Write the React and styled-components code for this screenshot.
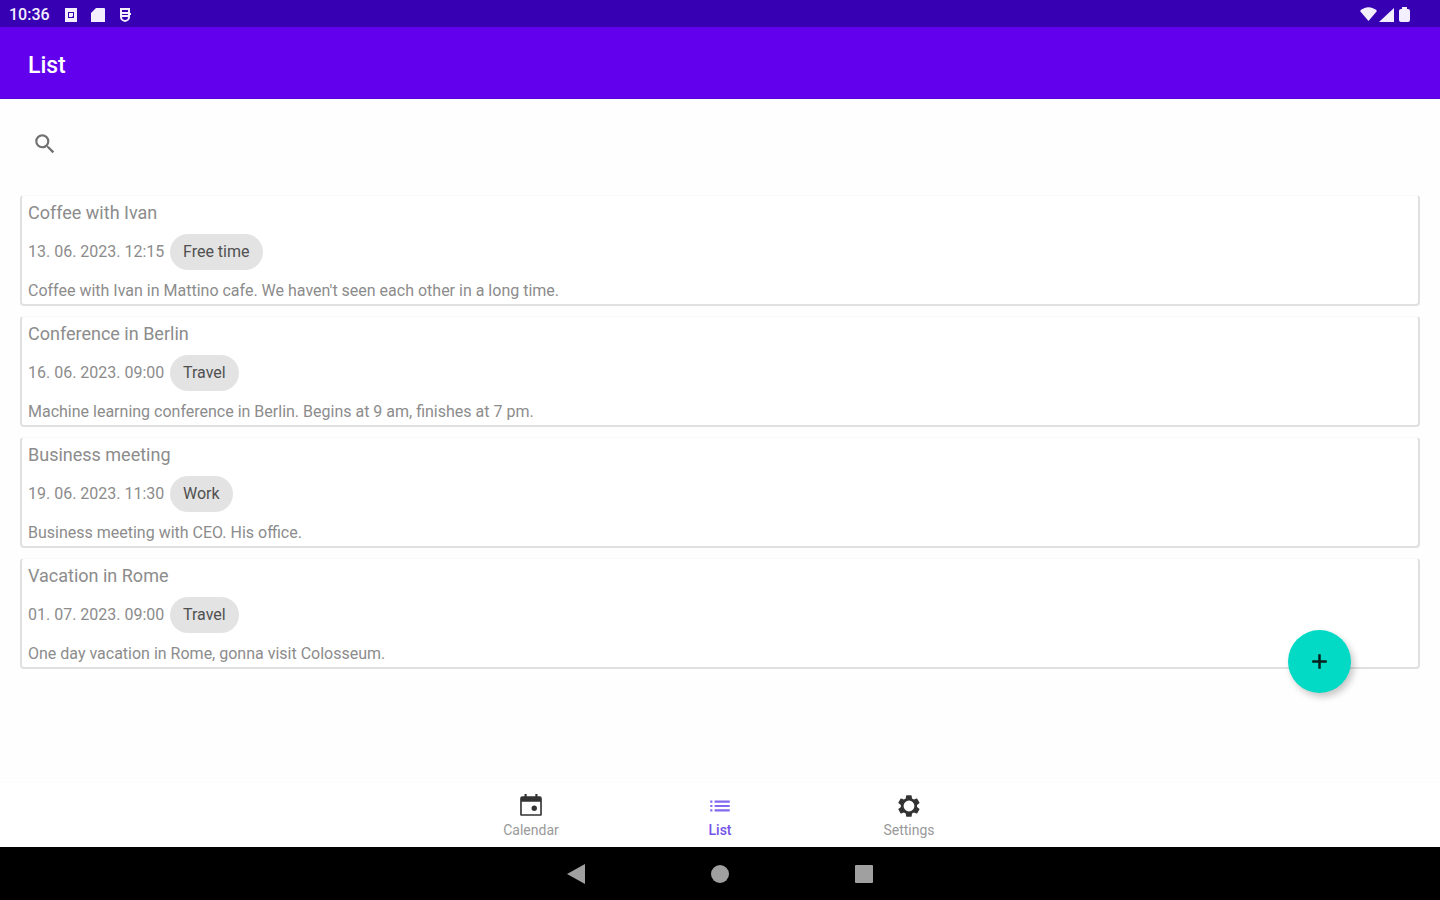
import React from "react";
import styled, { createGlobalStyle } from "styled-components";

const GlobalStyle = createGlobalStyle`
  *, *::before, *::after { box-sizing: border-box; }
  body {
    margin: 0;
    background: #fefefe;
    font-family: Roboto, "Noto Sans", sans-serif;
    color: #8c8c8c;
  }
  h1, h2, p, ul { margin: 0; padding: 0; }
  ul { list-style: none; }
  button { font: inherit; border: 0; padding: 0; background: none; cursor: pointer; }
`;

const Screen = styled.div`
  position: relative;
  display: flex;
  flex-direction: column;
  min-height: 100vh;
`;

const StatusBar = styled.div`
  display: flex;
  align-items: center;
  justify-content: space-between;
  height: 27px;
  padding: 2px 28px 0 9px;
  background: #3700b3;
  color: #f4efff;
`;

const StatusGroup = styled.div`
  display: flex;
  align-items: center;
  gap: ${({ $gap }) => $gap}px;
  svg { display: block; }
`;

const Clock = styled.time`
  width: 42px;
  font-size: 16px;
  font-weight: 500;
  line-height: 20px;
`;

const AppBar = styled.header`
  display: flex;
  align-items: center;
  height: 72px;
  padding: 6px 28px 0;
  background: #6200ee;
  color: #fff;
  border-bottom: 1px solid #5600d4;
`;

const Title = styled.h1`
  font-size: 23px;
  font-weight: 500;
  line-height: 28px;
`;

const Main = styled.main`
  flex: 1;
  padding: 18px 20px;
`;

const SearchButton = styled.button`
  display: flex;
  align-items: center;
  justify-content: center;
  width: 50px;
  height: 54px;
  margin-bottom: 24px;
  color: #707070;
`;

const EventList = styled.ul`
  display: flex;
  flex-direction: column;
  gap: 10px;
`;

const EventCard = styled.li`
  padding: 6px 6px 3px;
  background: #fff;
  border: 2px solid #e0e0e0;
  border-top: 1px solid #f9f9f9;
  border-radius: 4px;
`;

const EventTitle = styled.h2`
  font-size: 18px;
  font-weight: 400;
  line-height: 22px;
`;

const EventMeta = styled.div`
  display: flex;
  align-items: center;
  gap: 6px;
  margin: 10px 0 11px;
  font-size: 16px;
  line-height: 20px;
`;

const EventDate = styled.time`
  width: 136px;
  white-space: nowrap;
`;

const Chip = styled.span`
  padding: 8px 13px;
  border-radius: 18px;
  background: #e3e3e3;
  color: #505050;
`;

const Description = styled.p`
  font-size: 16px;
  line-height: 20px;
`;

const AddButton = styled.button`
  position: absolute;
  right: 89px;
  bottom: 207px;
  display: flex;
  align-items: center;
  justify-content: center;
  width: 63px;
  height: 63px;
  border-radius: 50%;
  background: #03dac5;
  color: #06201d;
  box-shadow: 3px 4px 7px rgba(0, 0, 0, 0.22);
`;

const BottomNav = styled.nav`
  display: flex;
  justify-content: center;
  height: 65px;
  background: #fff;
  border-top: 1px solid #fcfcfc;
`;

const NavItem = styled.a`
  display: flex;
  flex-direction: column;
  align-items: center;
  width: 189px;
  padding-top: 10px;
  color: ${({ $active }) => ($active ? "#7452ea" : "#999")};
  font-size: 14px;
  font-weight: ${({ $active }) => ($active ? 500 : 400)};
  line-height: 16px;
  text-decoration: none;
  svg { display: block; margin-bottom: 3px; color: ${({ $active }) => ($active ? "#8468ee" : "#333")}; }
`;

const SystemBar = styled.div`
  display: flex;
  justify-content: center;
  height: 53px;
  background: #000;
  color: #a0a0a0;
`;

const SystemButton = styled.button`
  display: flex;
  align-items: center;
  justify-content: center;
  width: 144px;
  color: inherit;
`;

function Icon({ size = 26, box = 24, children }) {
  return (
    <svg width={size} height={size} viewBox={`0 0 ${box} ${box}`} fill="currentColor" aria-hidden="true">
      {children}
    </svg>
  );
}

const events = [
  { title: "Coffee with Ivan", date: "13. 06. 2023. 12:15", tag: "Free time", text: "Coffee with Ivan in Mattino cafe. We haven't seen each other in a long time." },
  { title: "Conference in Berlin", date: "16. 06. 2023. 09:00", tag: "Travel", text: "Machine learning conference in Berlin. Begins at 9 am, finishes at 7 pm." },
  { title: "Business meeting", date: "19. 06. 2023. 11:30", tag: "Work", text: "Business meeting with CEO. His office." },
  { title: "Vacation in Rome", date: "01. 07. 2023. 09:00", tag: "Travel", text: "One day vacation in Rome, gonna visit Colosseum." },
];

const tabs = [
  {
    label: "Calendar",
    icon: (
      <path
        fillRule="evenodd"
        d="M16 1v2H8V1H6v2H4a2 2 0 0 0-2 2v15a1 1 0 0 0 1 1h18a1 1 0 0 0 1-1V5a2 2 0 0 0-2-2h-2V1h-2zM3.500 8h17v11.500h-17V8zM15 11.500a2.500 2.500 0 1 0 0 5 2.500 2.500 0 0 0 0-5z"
      />
    ),
  },
  {
    label: "List",
    active: true,
    icon: <path d="M3 13h2v-2H3v2zm0 4h2v-2H3v2zm0-8h2V7H3v2zm4 4h14v-2H7v2zm0 4h14v-2H7v2zM7 7v2h14V7H7z" />,
  },
  {
    label: "Settings",
    icon: (
      <path
        fillRule="evenodd"
        d="M19.400 13a7.500 7.500 0 0 0 0-2l2.100-1.600c.2-.2.3-.4.1-.7l-2-3.400c-.1-.2-.4-.3-.6-.2l-2.500 1a7 7 0 0 0-1.700-1l-.4-2.600c0-.3-.2-.5-.5-.5h-4c-.2 0-.4.2-.5.4L9 5.100a7 7 0 0 0-1.700 1l-2.500-1c-.2-.1-.5 0-.6.2l-2 3.400c-.1.200 0 .5.200.700L4.500 11a7.500 7.500 0 0 0 0 2l-2.100 1.600c-.2.200-.3.500-.2.700l2 3.400c.2.300.4.300.6.200l2.500-1a7 7 0 0 0 1.700 1l.4 2.700c.1.200.3.400.5.400h4c.3 0 .5-.2.5-.4l.4-2.700a7 7 0 0 0 1.700-1l2.500 1c.2.100.5 0 .6-.2l2-3.400c.2-.2.100-.5-.1-.7L19.400 13zM12 17a5 5 0 1 1 0-10 5 5 0 0 1 0 10z"
      />
    ),
  },
];

export default function App() {
  return (
    <>
      <GlobalStyle />
      <Screen>
        <StatusBar>
          <StatusGroup $gap={13}>
            <Clock>10:36</Clock>
            <Icon size={14} box={14}>
              <path fillRule="evenodd" d="M1 0h12v14H1V0zm3 4v6h6V4H4zm1 1h4v3L8 9H5V5z" />
            </Icon>
            <Icon size={14} box={14}>
              <path d="M5 0h8a1 1 0 0 1 1 1v13a1 1 0 0 1-1 1H1a1 1 0 0 1-1-1V5l5-5z" />
            </Icon>
            <Icon size={14} box={14}>
              <path fillRule="evenodd" d="M2 0h10v5h1v2h-1v2c0 3-2 4-5 5-3-1-5-2-5-5h2c0 2 1 3 3 3s3-1 3-3H2V0zm2 2v2h6V2H4zm0 4v1h6V6H4z" />
            </Icon>
          </StatusGroup>
          <StatusGroup $gap={2}>
            <Icon size={17} box={17}>
              <path d="M0 5c5-5 12-5 17 0l-8.500 10L0 5z" />
            </Icon>
            <Icon size={16} box={16}>
              <path d="M15 1v14H0L15 1z" />
            </Icon>
            <Icon size={15} box={15}>
              <path d="M5 0h5v2h1a2 2 0 0 1 2 2v9a2 2 0 0 1-2 2H4a2 2 0 0 1-2-2V4a2 2 0 0 1 2-2h1V0z" />
            </Icon>
          </StatusGroup>
        </StatusBar>
        <AppBar>
          <Title>List</Title>
        </AppBar>
        <Main>
          <SearchButton type="button" aria-label="Search">
            <Icon>
              <path d="M15.500 14h-.79l-.28-.27A6.470 6.470 0 0 0 16 9.500 6.500 6.500 0 1 0 9.500 16c1.610 0 3.090-.59 4.230-1.570l.27.28v.79l5 4.990L20.490 19l-4.990-5zm-6 0C7.010 14 5 11.990 5 9.500S7.010 5 9.500 5 14 7.010 14 9.500 11.990 14 9.500 14z" />
            </Icon>
          </SearchButton>
          <EventList>
            {events.map((event) => (
              <EventCard key={event.title}>
                <EventTitle>{event.title}</EventTitle>
                <EventMeta>
                  <EventDate>{event.date}</EventDate>
                  <Chip>{event.tag}</Chip>
                </EventMeta>
                <Description>{event.text}</Description>
              </EventCard>
            ))}
          </EventList>
        </Main>
        <BottomNav>
          {tabs.map((tab) => (
            <NavItem key={tab.label} href={`#${tab.label.toLowerCase()}`} $active={tab.active}>
              <Icon>{tab.icon}</Icon>
              {tab.label}
            </NavItem>
          ))}
        </BottomNav>
        <SystemBar>
          <SystemButton type="button" aria-label="Back">
            <Icon size={20} box={20}><path d="M19 0v20L1 10 19 0z" /></Icon>
          </SystemButton>
          <SystemButton type="button" aria-label="Home">
            <Icon size={18} box={18}><circle cx="9" cy="9" r="9" /></Icon>
          </SystemButton>
          <SystemButton type="button" aria-label="Recent apps">
            <Icon size={18} box={18}><rect width="18" height="18" rx="1" /></Icon>
          </SystemButton>
        </SystemBar>
        <AddButton type="button" aria-label="Add event">
          <Icon size={25}><path d="M19 13.200h-5.800V19h-2.400v-5.800H5v-2.400h5.800V5h2.400v5.800H19v2.400z" /></Icon>
        </AddButton>
      </Screen>
    </>
  );
}
